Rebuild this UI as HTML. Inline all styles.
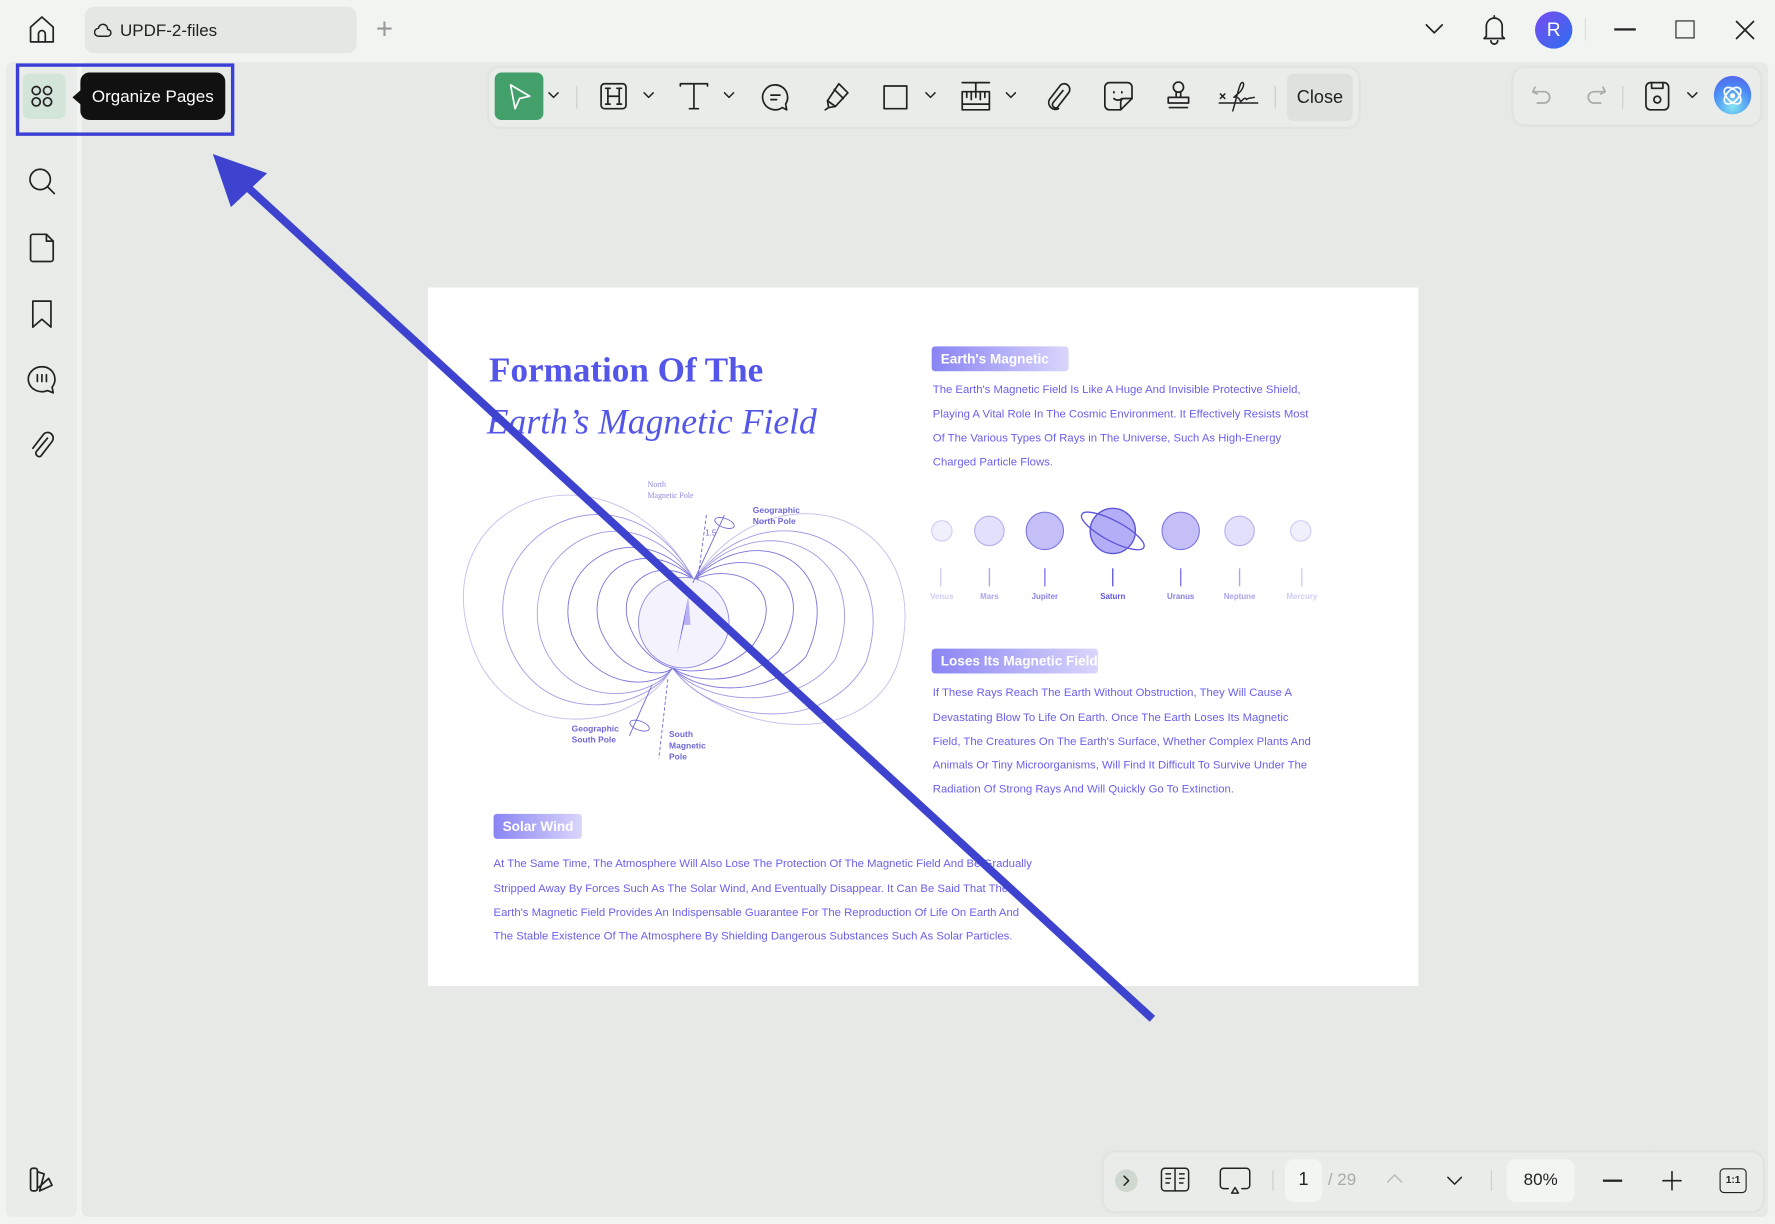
<!DOCTYPE html>
<html><head><meta charset="utf-8">
<style>
*{margin:0;padding:0;box-sizing:border-box}
html,body{width:1775px;height:1223px;overflow:hidden;background:#f2f4f2;font-family:"Liberation Sans",sans-serif}
#w{position:absolute;left:0;top:0;width:1568px;height:1081px;transform:scale(1.13202);transform-origin:0 0;background:#f2f4f2}
.a{position:absolute}
svg.i{position:absolute;fill:none;stroke:#222;stroke-width:1.5;stroke-linecap:round;stroke-linejoin:round}
.t{position:absolute;font-size:10px;color:#6a60ec;white-space:nowrap;letter-spacing:0px}
.lab{position:absolute;height:22px;border-radius:3px;background:linear-gradient(90deg,#8a84f4,#d9d6fb);color:#fff;font-weight:bold;font-size:12px;line-height:22px;padding-left:8px}
.pl{position:absolute;font-size:7px;font-weight:bold;text-align:center;width:50px}
</style></head><body><div id="w">
<!-- title bar -->
<svg class="i" style="left:23px;top:12px" width="28" height="28" viewBox="0 0 28 28"><path d="M4 12 L14 3 L24 12 V25 H4 Z"/><path d="M11 25 V18 a3 3 0 0 1 6 0 V25"/></svg>
<div class="a" style="left:75px;top:6px;width:240px;height:41px;background:#e4e7e4;border-radius:8px"></div>
<svg class="i" style="left:83px;top:20px;stroke-width:1.3" width="16" height="14" viewBox="0 0 16 14"><path d="M4 12 H12 a3 3 0 0 0 0-6 a4 4 0 0 0-8-1 a3.5 3.5 0 0 0 0 7z"/></svg>
<div class="a" style="left:106px;top:19px;font-size:15px;color:#222">UPDF-2-files</div>
<div class="a" style="left:332px;top:10px;font-size:26px;color:#999;font-weight:300">+</div>
<svg class="i" style="left:1258px;top:20px" width="18" height="12" viewBox="0 0 18 12"><path d="M2 2 L9 9 L16 2"/></svg>
<svg class="i" style="left:1308px;top:12px" width="24" height="28" viewBox="0 0 24 28"><path d="M5 20 V11 a7 7 0 0 1 14 0 V20 L21 22 H3 Z"/><path d="M12 2 V4"/><path d="M9 24 a3 3 0 0 0 6 0"/></svg>
<div class="a" style="left:1356px;top:10px;width:33px;height:33px;border-radius:50%;background:linear-gradient(135deg,#7a4cf0,#2a6ff0);color:#fff;font-size:17px;text-align:center;line-height:33px">R</div>
<div class="a" style="left:1400px;top:16px;width:1px;height:20px;background:#ddd"></div>
<div class="a" style="left:1426px;top:25px;width:19px;height:1.5px;background:#222"></div>
<div class="a" style="left:1480px;top:18px;width:17px;height:16px;border:1.5px solid #222"></div>
<svg class="i" style="left:1532px;top:17px" width="19" height="19" viewBox="0 0 19 19"><path d="M2 2 L17 17 M17 2 L2 17"/></svg>
<!-- left sidebar -->
<div class="a" style="left:5px;top:55px;width:63px;height:1020px;background:#e9ece9;border-radius:6px"></div>
<!-- main canvas -->
<div class="a" style="left:72px;top:55px;width:1490px;height:1020px;background:#e6e9e6;border-radius:6px"></div>
<div class="a" style="left:0;top:1076px;width:1568px;height:5px;background:#f2f4f2"></div>
<!-- sidebar icons -->
<div class="a" style="left:20px;top:65px;width:38px;height:40px;background:#d3e5d9;border-radius:6px"></div>
<svg class="i" style="left:25px;top:72px" width="26" height="26" viewBox="0 0 26 26"><circle cx="7" cy="8" r="3.6"/><circle cx="17" cy="8" r="3.6"/><circle cx="7" cy="18" r="3.6"/><circle cx="17" cy="18" r="3.6"/></svg>
<svg class="i" style="left:23px;top:146px" width="28" height="28" viewBox="0 0 28 28"><circle cx="12.5" cy="12.5" r="9"/><path d="M19 19 L25 25"/></svg>
<svg class="i" style="left:25px;top:205px" width="24" height="28" viewBox="0 0 24 28"><path d="M4 2 H16 L22 8 V24 a2 2 0 0 1-2 2 H4 a2 2 0 0 1-2-2 V4 a2 2 0 0 1 2-2z"/><path d="M16 2 V8 H22"/></svg>
<svg class="i" style="left:26px;top:264px" width="22" height="28" viewBox="0 0 22 28"><path d="M3 2 H19 V25 L11 18 L3 25 Z"/></svg>
<svg class="i" style="left:22px;top:321px" width="30" height="28" viewBox="0 0 30 28"><path d="M15 3 a12 11 0 1 0 5 21 L25 26 L24 21 a11 11 0 0 0-9-18z"/><path d="M11 10 V16 M15 10 V16 M19 10 V16"/></svg>
<svg class="i" style="left:24px;top:379px" width="26" height="28" viewBox="0 0 26 28"><path d="M18 8 L8 20 a3 3 0 0 0 4 4 L22 11 a5 5 0 0 0-7-7 L5 17"/></svg>
<svg class="i" style="left:24px;top:1029px" width="28" height="26" viewBox="0 0 28 26"><rect x="3" y="3" width="6" height="20" rx="2"/><path d="M9 6 L15 8 L11 23"/><path d="M10 20 L19 12 L22 18 L11 23"/></svg>
<!-- tooltip -->
<div class="a" style="left:71px;top:64px;width:128px;height:42px;background:#111;border-radius:8px;color:#fff;font-size:15px;line-height:44px;text-align:center">Organize Pages</div>
<div class="a" style="left:64px;top:79px;width:0;height:0;border-top:7px solid transparent;border-bottom:7px solid transparent;border-right:8px solid #111"></div>
<div class="a" style="left:14px;top:56px;width:193px;height:64px;border:3px solid #3b3fd6"></div>
<!-- main toolbar -->
<div class="a" style="left:432px;top:60px;width:768px;height:52px;background:#e9ece9;border-radius:10px;box-shadow:0 0 0 2px #e0e3e0"></div>
<div class="a" style="left:437px;top:64px;width:43px;height:42px;background:#43a06a;border-radius:6px"></div>
<svg class="i" style="left:447px;top:72px;stroke:#fff" width="24" height="26" viewBox="0 0 24 26"><path d="M4 3 L21 13 L12 15 L8 24 Z"/></svg>
<svg class="i" style="left:483px;top:80px;stroke-width:1.3" width="12" height="8" viewBox="0 0 12 8"><path d="M2 2 L6 6 L10 2"/></svg>
<div class="a" style="left:509px;top:76px;width:1px;height:20px;background:#ccc"></div>
<svg class="i" style="left:529px;top:72px" width="26" height="26" viewBox="0 0 26 26"><rect x="2" y="2" width="22" height="22" rx="3"/><path d="M8 6 V20 M18 6 V20 M8 13 H18 M6 6 H10 M16 6 H20 M6 20 H10 M16 20 H20"/></svg>
<svg class="i" style="left:567px;top:80px;stroke-width:1.3" width="12" height="8" viewBox="0 0 12 8"><path d="M2 2 L6 6 L10 2"/></svg>
<svg class="i" style="left:599px;top:72px" width="28" height="26" viewBox="0 0 28 26"><path d="M2 4 V2 H26 V4 M14 2 V24 M10 24 H18"/></svg>
<svg class="i" style="left:638px;top:80px;stroke-width:1.3" width="12" height="8" viewBox="0 0 12 8"><path d="M2 2 L6 6 L10 2"/></svg>
<svg class="i" style="left:671px;top:72px" width="28" height="28" viewBox="0 0 28 28"><path d="M14 3 a11 11 0 1 0 6 20 L24 25 L23 20 a11 11 0 0 0-9-17z"/><path d="M10 12 H18 M10 16 H15"/></svg>
<svg class="i" style="left:726px;top:71px" width="26" height="28" viewBox="0 0 26 28"><path d="M15 3 L23 11 L12 23 L6 24 L5 18 Z"/><path d="M11 8 L19 16 M5 18 L12 23 M3 26 L6 24"/></svg>
<svg class="i" style="left:779px;top:74px" width="24" height="24" viewBox="0 0 24 24"><rect x="2" y="2" width="20" height="20"/></svg>
<svg class="i" style="left:816px;top:80px;stroke-width:1.3" width="12" height="8" viewBox="0 0 12 8"><path d="M2 2 L6 6 L10 2"/></svg>
<svg class="i" style="left:848px;top:71px" width="28" height="28" viewBox="0 0 28 28"><path d="M2 2 H26 M14 2 V9 M2 10 H26 V26 H2 Z M6 10 V15 M10 10 V17 M14 10 V15 M18 10 V17 M22 10 V15 M2 21 H26"/></svg>
<svg class="i" style="left:887px;top:80px;stroke-width:1.3" width="12" height="8" viewBox="0 0 12 8"><path d="M2 2 L6 6 L10 2"/></svg>
<svg class="i" style="left:922px;top:71px" width="26" height="28" viewBox="0 0 26 28"><path d="M17 9 L8 20 a3 3 0 0 0 4 4 L22 11 a5 5 0 0 0-7-7 L5 17 a6 6 0 0 0 8 8"/></svg>
<svg class="i" style="left:974px;top:71px" width="28" height="28" viewBox="0 0 28 28"><path d="M6 2 H22 a4 4 0 0 1 4 4 V16 L16 26 H6 a4 4 0 0 1-4-4 V6 a4 4 0 0 1 4-4z"/><path d="M10 10 V11 M17 10 V11 M10 16 a5 5 0 0 0 7 0 M16 26 V19 a3 3 0 0 1 3-3 H26"/></svg>
<svg class="i" style="left:1027px;top:70px" width="28" height="30" viewBox="0 0 28 30"><circle cx="14" cy="7" r="4.5"/><path d="M12 11 V16 M16 11 V16 M5 16 H23 V21 H5 Z M6 25 H22"/></svg>
<svg class="i" style="left:1076px;top:70px;stroke-width:1.3" width="36" height="30" viewBox="0 0 36 30"><path d="M2 13 L6 17 M6 13 L2 17 M1 21 H35"/><path d="M13 28 C16 18 18 8 20 4 C22 1 24 4 21 9 C19 13 15 14 14 16 C17 15 19 17 20 20 C22 18 24 15 25 18 C27 16 29 17 32 16"/></svg>
<div class="a" style="left:1126px;top:76px;width:1px;height:20px;background:#ccc"></div>
<div class="a" style="left:1137px;top:65px;width:58px;height:42px;background:#dee1de;border-radius:6px;font-size:16px;color:#222;text-align:center;line-height:44px">Close</div>
<!-- right toolbar -->
<div class="a" style="left:1337px;top:60px;width:218px;height:50px;background:#e9ece9;border-radius:10px;box-shadow:0 0 0 2px #e0e3e0"></div>
<svg class="i" style="left:1352px;top:74px;stroke:#aaa" width="20" height="20" viewBox="0 0 20 20"><path d="M4 3 L2 7 L6 9 M2 7 H12 a5 5 0 0 1 0 10 H6"/></svg>
<svg class="i" style="left:1400px;top:74px;stroke:#aaa" width="20" height="20" viewBox="0 0 20 20"><path d="M16 3 L18 7 L14 9 M18 7 H8 a5 5 0 0 0 0 10 H14"/></svg>
<div class="a" style="left:1433px;top:76px;width:1px;height:20px;background:#ccc"></div>
<svg class="i" style="left:1451px;top:71px" width="26" height="28" viewBox="0 0 26 28"><rect x="3" y="2" width="20" height="24" rx="4"/><path d="M8 2 V7 H18 V2"/><circle cx="13" cy="17" r="3"/></svg>
<svg class="i" style="left:1489px;top:80px;stroke-width:1.3" width="12" height="8" viewBox="0 0 12 8"><path d="M2 2 L6 6 L10 2"/></svg>
<div class="a" style="left:1514px;top:67px;width:33px;height:34px;border-radius:50%;background:radial-gradient(circle at 50% 80%,#7fe3f0,#4a8cf5 55%,#5a56e8)"></div>
<svg class="i" style="left:1518px;top:72px;stroke:#fff;stroke-width:1.5" width="25" height="25" viewBox="0 0 25 25"><ellipse cx="12.5" cy="12.5" rx="9" ry="5" transform="rotate(45 12.5 12.5)"/><ellipse cx="12.5" cy="12.5" rx="9" ry="5" transform="rotate(-45 12.5 12.5)"/><circle cx="12.5" cy="12.5" r="1.5" fill="#fff"/></svg>
<!-- page -->
<div class="a" style="left:378px;top:254px;width:875px;height:617px;background:#fff"></div>
<div class="a" style="left:432px;top:309px;font-family:'Liberation Serif',serif;font-weight:bold;font-size:31px;color:#5356e8">Formation Of The</div>
<div class="a" style="left:430px;top:355px;font-family:'Liberation Serif',serif;font-style:italic;font-size:31.5px;color:#5356e8">Earth’s Magnetic Field</div>
<!-- diagram -->
<svg class="a" style="left:400px;top:410px" width="410" height="280" viewBox="400 410 410 280" fill="none" stroke-width="0.8">
<g stroke="#c3c0ec">
<path d="M613,512 C540,380 380,440 414,560 C440,660 560,650 594,590"/>
<path d="M613,512 C680,410 820,450 797,570 C780,670 640,650 594,590"/>
</g>
<g stroke="#a09be4">
<path d="M613,512 C550,400 420,470 448,565 C475,645 570,630 594,590"/>
<path d="M613,512 C680,425 800,480 765,585 C730,650 630,640 594,590"/>
<path d="M613,512 C555,425 455,485 478,565 C500,628 575,620 594,590"/>
<path d="M613,512 C675,440 775,490 738,582 C705,628 625,625 594,590"/>
</g>
<g stroke="#7a74dc">
<path d="M613,512 C560,450 485,500 505,560 C525,610 580,610 594,590"/>
<path d="M613,512 C670,455 750,500 712,580 C680,615 620,615 594,590"/>
<path d="M613,512 C570,470 515,505 530,555 C545,595 585,600 594,590"/>
<path d="M613,512 C660,475 730,510 688,575 C660,605 615,605 594,590"/>
<path d="M613,512 C580,490 545,515 555,550 C565,580 590,590 594,590"/>
<path d="M613,512 C650,495 700,520 665,570 C640,595 610,595 594,590"/>
</g>
<circle cx="604" cy="550" r="40" fill="#f3f2fd" stroke="#8f8ae0"/>
<path d="M608,527 L604,552 L598,578 L603,552 Z" fill="#6a62e6"/>
<path d="M608,527 L604,552 L610,552 Z" fill="#b7b3f3"/>
<path d="M640,455 L612,515 M576,605 L556,650" stroke="#6f68d8"/>
<path d="M624,455 L616,515 M590,600 L582,670" stroke="#6f68d8" stroke-dasharray="3 2"/>
<ellipse cx="640" cy="462" rx="9" ry="4" stroke="#6f68d8" transform="rotate(20 640 462)"/>
<ellipse cx="565" cy="641" rx="9" ry="4" stroke="#6f68d8" transform="rotate(20 565 641)"/>
<text x="623" y="473" font-size="7" fill="#6f68d8" font-family="Liberation Sans">1.5</text>
</svg>
<div class="a" style="left:572px;top:423px;font-family:'Liberation Serif',serif;font-size:7px;color:#8f8ae0;line-height:10px">North<br>Magnetic Pole</div>
<div class="a" style="left:665px;top:446px;font-size:7.5px;font-weight:bold;color:#6f68d8;line-height:10px">Geographic<br>North Pole</div>
<div class="a" style="left:505px;top:639px;font-size:7.5px;font-weight:bold;color:#6f68d8;line-height:10px">Geographic<br>South Pole</div>
<div class="a" style="left:591px;top:644px;font-size:7.5px;font-weight:bold;color:#6f68d8;line-height:10px">South<br>Magnetic<br>Pole</div>
<!-- right column -->
<div class="lab" style="left:823px;top:306px;width:121px">Earth's Magnetic</div>
<div class="t" style="left:824px;top:339px">The Earth's Magnetic Field Is Like A Huge And Invisible Protective Shield,</div>
<div class="t" style="left:824px;top:361px">Playing A Vital Role In The Cosmic Environment. It Effectively Resists Most</div>
<div class="t" style="left:824px;top:382px">Of The Various Types Of Rays in The Universe, Such As High-Energy</div>
<div class="t" style="left:824px;top:403px">Charged Particle Flows.</div>
<!-- planets -->
<svg class="a" style="left:815px;top:440px" width="360" height="100" viewBox="815 440 360 100" fill="none">
<circle cx="832" cy="469" r="9" fill="#f0effc" stroke="#cfcdf5"/>
<circle cx="874" cy="469" r="13" fill="#e2e0fb" stroke="#b5b1ef"/>
<circle cx="923" cy="469" r="16.5" fill="#c4c0f7" stroke="#7d77e3"/>
<circle cx="983" cy="469" r="20" fill="#b3aef5" stroke="#5d56da" stroke-width="1.2"/>
<ellipse cx="983" cy="469" rx="31" ry="9" stroke="#5d56da" stroke-width="1.2" transform="rotate(28 983 469)"/>
<circle cx="1043" cy="469" r="16.5" fill="#c4c0f7" stroke="#7d77e3"/>
<circle cx="1095" cy="469" r="13" fill="#e2e0fb" stroke="#b5b1ef"/>
<circle cx="1149" cy="469" r="9" fill="#f0effc" stroke="#cfcdf5"/>
<g stroke-width="1.2"><path d="M831,502 V518" stroke="#cfcdf5"/><path d="M874,502 V518" stroke="#a9a5ee"/><path d="M923,502 V518" stroke="#7d77e3"/><path d="M983,502 V518" stroke="#5d56da"/><path d="M1043,502 V518" stroke="#7d77e3"/><path d="M1095,502 V518" stroke="#a9a5ee"/><path d="M1150,502 V518" stroke="#cfcdf5"/></g>
</svg>
<div class="pl" style="left:807px;top:524px;color:#cfcdf5">Venus</div>
<div class="pl" style="left:849px;top:524px;color:#a9a5ee">Mars</div>
<div class="pl" style="left:898px;top:524px;color:#8680e6">Jupiter</div>
<div class="pl" style="left:958px;top:524px;color:#5d56da">Saturn</div>
<div class="pl" style="left:1018px;top:524px;color:#8680e6">Uranus</div>
<div class="pl" style="left:1070px;top:524px;color:#a9a5ee">Neptune</div>
<div class="pl" style="left:1125px;top:524px;color:#cfcdf5">Mercury</div>
<div class="lab" style="left:823px;top:573px;width:147px">Loses Its Magnetic Field</div>
<div class="t" style="left:824px;top:607px">If These Rays Reach The Earth Without Obstruction, They Will Cause A</div>
<div class="t" style="left:824px;top:629px">Devastating Blow To Life On Earth. Once The Earth Loses Its Magnetic</div>
<div class="t" style="left:824px;top:650px">Field, The Creatures On The Earth's Surface, Whether Complex Plants And</div>
<div class="t" style="left:824px;top:671px">Animals Or Tiny Microorganisms, Will Find It Difficult To Survive Under The</div>
<div class="t" style="left:824px;top:692px">Radiation Of Strong Rays And Will Quickly Go To Extinction.</div>
<div class="lab" style="left:436px;top:719px;width:78px">Solar Wind</div>
<div class="t" style="left:436px;top:758px">At The Same Time, The Atmosphere Will Also Lose The Protection Of The Magnetic Field And Be Gradually</div>
<div class="t" style="left:436px;top:780px">Stripped Away By Forces Such As The Solar Wind, And Eventually Disappear. It Can Be Said That The</div>
<div class="t" style="left:436px;top:801px">Earth's Magnetic Field Provides An Indispensable Guarantee For The Reproduction Of Life On Earth And</div>
<div class="t" style="left:436px;top:822px">The Stable Existence Of The Atmosphere By Shielding Dangerous Substances Such As Solar Particles.</div>
<!-- bottom bar -->
<div class="a" style="left:975px;top:1018px;width:582px;height:52px;background:#e9ece9;border-radius:10px;box-shadow:0 0 0 2px #e0e3e0"></div>
<div class="a" style="left:985px;top:1033px;width:20px;height:20px;border-radius:50%;background:#cfd8cf"></div>
<svg class="i" style="left:990px;top:1038px;stroke-width:1.3" width="10" height="10" viewBox="0 0 10 10"><path d="M3 1 L7 5 L3 9"/></svg>
<svg class="i" style="left:1024px;top:1030px;stroke-width:1.3" width="28" height="24" viewBox="0 0 28 24"><rect x="2" y="2" width="24" height="20" rx="3"/><path d="M14 2 V22 M6 7 H10 M6 11 H10 M6 15 H9 M18 7 H22 M18 11 H22 M18 15 H21"/></svg>
<svg class="i" style="left:1076px;top:1030px;stroke-width:1.3" width="30" height="28" viewBox="0 0 30 28"><path d="M9 20 H5 a3 3 0 0 1-3-3 V5 a3 3 0 0 1 3-3 H25 a3 3 0 0 1 3 3 V17 a3 3 0 0 1-3 3 H21"/><path d="M15 19 L12 24 H18 Z"/></svg>
<div class="a" style="left:1124px;top:1034px;width:1px;height:18px;background:#ccc"></div>
<div class="a" style="left:1135px;top:1024px;width:33px;height:38px;background:#f3f5f3;border-radius:8px;font-size:16px;color:#222;text-align:center;line-height:38px">1</div>
<div class="a" style="left:1173px;top:1034px;font-size:15px;color:#aaa">/ 29</div>
<svg class="i" style="left:1224px;top:1036px;stroke:#bbb;stroke-width:1.3" width="16" height="10" viewBox="0 0 16 10"><path d="M2 8 L8 2 L14 8"/></svg>
<svg class="i" style="left:1277px;top:1038px;stroke-width:1.3" width="16" height="10" viewBox="0 0 16 10"><path d="M2 2 L8 8 L14 2"/></svg>
<div class="a" style="left:1317px;top:1034px;width:1px;height:18px;background:#ccc"></div>
<div class="a" style="left:1331px;top:1024px;width:60px;height:38px;background:#f3f5f3;border-radius:8px;font-size:15px;color:#222;text-align:center;line-height:38px">80%</div>
<div class="a" style="left:1416px;top:1042px;width:17px;height:1.5px;background:#222"></div>
<svg class="i" style="left:1468px;top:1034px;stroke-width:1.4" width="18" height="18" viewBox="0 0 18 18"><path d="M9 1 V17 M1 9 H17"/></svg>
<div class="a" style="left:1519px;top:1032px;width:24px;height:22px;border:1.4px solid #222;border-radius:4px;font-size:9px;font-weight:bold;text-align:center;line-height:19px;color:#222">1:1</div>
<!-- annotation arrow -->
<svg class="a" style="left:0;top:0" width="1568" height="1081" viewBox="0 0 1568 1081">
<path d="M1018,900 L215,162" stroke="#3d43cf" stroke-width="7"/>
<path d="M188,136 L236,153 L204,183 Z" fill="#3d43cf"/>
</svg>
</div></body></html>
